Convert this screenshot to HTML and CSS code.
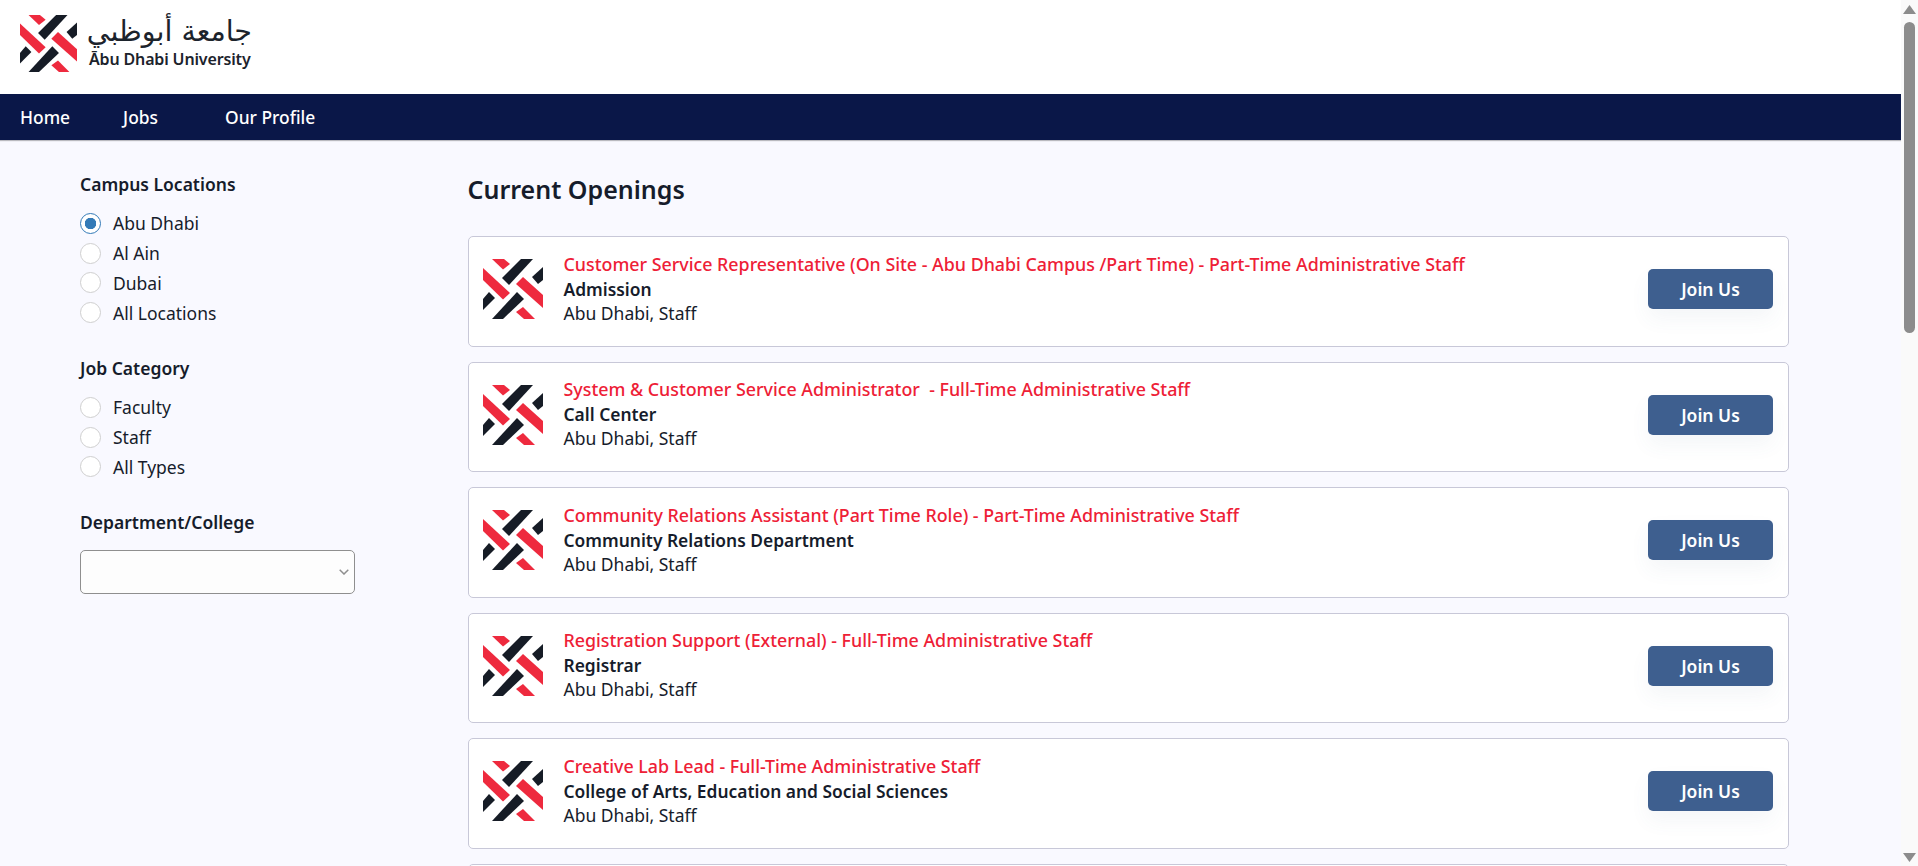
FILE: index.html
```html
<!DOCTYPE html>
<html lang="en">
<head>
<meta charset="utf-8">
<title>Abu Dhabi University - Current Openings</title>
<link rel="stylesheet" href="styles.css">
</head>
<body>
<svg class="defs" width="0" height="0" aria-hidden="true">
  <symbol id="mark" viewBox="0 0 60 60">
    <g fill="#ee2a3e">
      <polygon points="9,0 21,0 27,5 20,10.5"/>
      <polygon points="0,9 27,34 20,40.5 0,21"/>
      <polygon points="40,18 60,36 60,49 33,25"/>
      <polygon points="40,48 52,60 41,60 33,53"/>
    </g>
    <g fill="#161c26">
      <polygon points="38,0 50,0 26,26 19,19"/>
      <polygon points="60,8 49,18 55,25 60,21"/>
      <polygon points="34,33 41,40 20,60 9,60"/>
      <polygon points="6,33 12,39 0,51 0,40"/>
    </g>
  </symbol>
</svg>
<div class="page">
  <header class="brand">
    <svg class="brand-mark"><use href="#mark"/></svg>
    <div class="brand-text">
      <div class="brand-ar" dir="rtl" lang="ar">جامعة أبوظبي</div>
      <div class="brand-en">Ābu Dhabi University</div>
    </div>
  </header>
  <nav class="nav">
    <a class="nav-home">Home</a>
    <a class="nav-jobs">Jobs</a>
    <a>Our Profile</a>
  </nav>
  <div class="content">
    <aside class="filters">
      <section class="filter">
        <h3>Campus Locations</h3>
        <label class="opt"><input type="radio" name="loc" checked><span>Abu Dhabi</span></label>
        <label class="opt"><input type="radio" name="loc"><span>Al Ain</span></label>
        <label class="opt"><input type="radio" name="loc"><span>Dubai</span></label>
        <label class="opt"><input type="radio" name="loc"><span>All Locations</span></label>
      </section>
      <section class="filter">
        <h3>Job Category</h3>
        <label class="opt"><input type="radio" name="cat"><span>Faculty</span></label>
        <label class="opt"><input type="radio" name="cat"><span>Staff</span></label>
        <label class="opt"><input type="radio" name="cat"><span>All Types</span></label>
      </section>
      <section class="filter">
        <h3 class="select-head">Department/College</h3>
        <select class="dept" aria-label="Department/College"><option></option></select>
      </section>
    </aside>
    <main class="openings">
      <h2>Current Openings</h2>
      <article class="job">
        <svg class="job-mark"><use href="#mark"/></svg>
        <div class="job-info">
          <div class="job-title">Customer Service Representative (On Site - Abu Dhabi Campus /Part Time) - Part-Time Administrative Staff</div>
          <div class="job-dept">Admission</div>
          <div class="job-loc">Abu Dhabi, Staff</div>
        </div>
        <button class="join">Join Us</button>
      </article>
      <article class="job">
        <svg class="job-mark"><use href="#mark"/></svg>
        <div class="job-info">
          <div class="job-title">System &amp; Customer Service Administrator&nbsp; - Full-Time Administrative Staff</div>
          <div class="job-dept">Call Center</div>
          <div class="job-loc">Abu Dhabi, Staff</div>
        </div>
        <button class="join">Join Us</button>
      </article>
      <article class="job">
        <svg class="job-mark"><use href="#mark"/></svg>
        <div class="job-info">
          <div class="job-title">Community Relations Assistant (Part Time Role) - Part-Time Administrative Staff</div>
          <div class="job-dept">Community Relations Department</div>
          <div class="job-loc">Abu Dhabi, Staff</div>
        </div>
        <button class="join">Join Us</button>
      </article>
      <article class="job">
        <svg class="job-mark"><use href="#mark"/></svg>
        <div class="job-info">
          <div class="job-title">Registration Support (External) - Full-Time Administrative Staff</div>
          <div class="job-dept">Registrar</div>
          <div class="job-loc">Abu Dhabi, Staff</div>
        </div>
        <button class="join">Join Us</button>
      </article>
      <article class="job">
        <svg class="job-mark"><use href="#mark"/></svg>
        <div class="job-info">
          <div class="job-title">Creative Lab Lead - Full-Time Administrative Staff</div>
          <div class="job-dept">College of Arts, Education and Social Sciences</div>
          <div class="job-loc">Abu Dhabi, Staff</div>
        </div>
        <button class="join">Join Us</button>
      </article>
      <article class="job"></article>
    </main>
  </div>
</div>
<div class="scrollbar" aria-hidden="true">
  <svg class="arrow" viewBox="0 0 13 9"><polygon points="6.5,0 13,9 0,9"/></svg>
  <div class="thumb"></div>
  <svg class="arrow arrow-down" viewBox="0 0 13 9"><polygon points="0,0 13,0 6.5,9"/></svg>
</div>
</body>
</html>
```
FILE: styles.css
```css
* { box-sizing: border-box; }
html, body { margin: 0; height: 100%; overflow: hidden; }
body {
  display: flex;
  font-family: "Noto Sans", sans-serif;
  font-size: 17.5px;
  color: #161c2b;
  background: #f9f9ff;
}
.defs { position: absolute; }
.page { flex: 1; min-width: 0; height: 866px; overflow: hidden; }

.brand {
  height: 94px;
  background: #fff;
  display: flex;
  align-items: flex-start;
  padding: 15px 0 0 20px;
}
.brand-mark { width: 57px; height: 57px; flex: none; }
.brand-text { margin-left: 12px; width: 163px; color: #1c232c; }
.brand-ar {
  font-family: "DejaVu Sans", sans-serif;
  font-size: 28.5px;
  line-height: 34px;
  height: 33px;
  text-align: right;
  white-space: nowrap;
}
.brand-en {
  font-weight: 600;
  font-size: 16px;
  line-height: 22px;
  white-space: nowrap;
  letter-spacing: -0.15px;
}

.nav {
  height: 46px;
  background: #0a1748;
  display: flex;
  align-items: center;
  padding-left: 20px;
  color: #fff;
  font-size: 17.4px;
  font-weight: 500;
  box-shadow: 0 1px 1px rgba(0, 0, 0, .25);
  position: relative;
}
.nav-home { margin-right: 53px; }
.nav-jobs { margin-right: 67px; }

.content { display: flex; }
.filters { width: 467.5px; flex: none; padding: 31.5px 0 0 80px; }
.filter { margin-bottom: 28.5px; }
.filter h3 {
  margin: 0 0 12.5px;
  font-size: 17.5px;
  line-height: 24px;
  font-weight: 600;
}
.filter:first-child h3 { margin-bottom: 13px; }
.filter .select-head { margin-bottom: 16px; }
.opt {
  display: flex;
  align-items: center;
  height: 29.75px;
  gap: 12px;
  line-height: 24px;
}
.opt input {
  appearance: none;
  margin: 0;
  width: 21px;
  height: 21px;
  border: 1px solid #cfcfcf;
  border-radius: 50%;
  background: #fff;
  flex: none;
}
.opt input:checked {
  border: 1px solid #337ab7;
  background: radial-gradient(circle, #337ab7 0 5.5px, #fff 6px);
}
.dept {
  display: block;
  appearance: none;
  width: 275px;
  height: 44px;
  border: 1px solid #8f8f8f;
  border-radius: 5px;
  background: #fdfdfd url("data:image/svg+xml,%3Csvg xmlns='http://www.w3.org/2000/svg' width='10' height='6'%3E%3Cpath d='M.7.7 5 5l4.3-4.3' fill='none' stroke='%238f8f8f' stroke-width='1.5'/%3E%3C/svg%3E") no-repeat right 5px center;
  font-family: inherit;
  font-size: 17.5px;
}

.openings { flex: 1; min-width: 0; padding: 33px 112px 0 0; }
.openings h2 {
  margin: 0 0 31px;
  font-size: 25px;
  line-height: 32px;
  font-weight: 600;
}
.job {
  display: flex;
  align-items: center;
  height: 110.5px;
  margin-bottom: 15px;
  padding: 0 15px 4px 14px;
  background: #fff;
  border: 1px solid #c8c8d8;
  border-radius: 5px;
}
.job-mark { width: 60px; height: 60px; flex: none; margin-right: 21px; }
.job-info { flex: 1; min-width: 0; line-height: 24.5px; margin-bottom: 1.5px; }
.job-title { color: #ee2036; font-size: 17.84px; font-weight: 500; }
.job-dept { font-size: 17.4px; font-weight: 600; margin-top: .5px; }
.job-loc { margin-top: -.5px; }
.join {
  width: 125px;
  height: 40px;
  flex: none;
  border: 0;
  border-radius: 5px;
  background: #3e5f8f;
  color: #fff;
  font-family: inherit;
  font-size: 17.5px;
  font-weight: 600;
  box-shadow: 0 10px 20px rgba(62, 95, 143, .06);
}

.scrollbar {
  width: 17px;
  flex: none;
  height: 866px;
  background: #fafafa;
  display: flex;
  flex-direction: column;
  align-items: center;
  padding: 5px 0 4px;
}
.arrow { width: 13px; height: 9px; fill: #8c8c8c; flex: none; }
.arrow-down { margin-top: auto; }
.thumb {
  width: 11px;
  height: 311px;
  margin-top: 8px;
  background: #8c8c8c;
  border-radius: 6px;
}
```
